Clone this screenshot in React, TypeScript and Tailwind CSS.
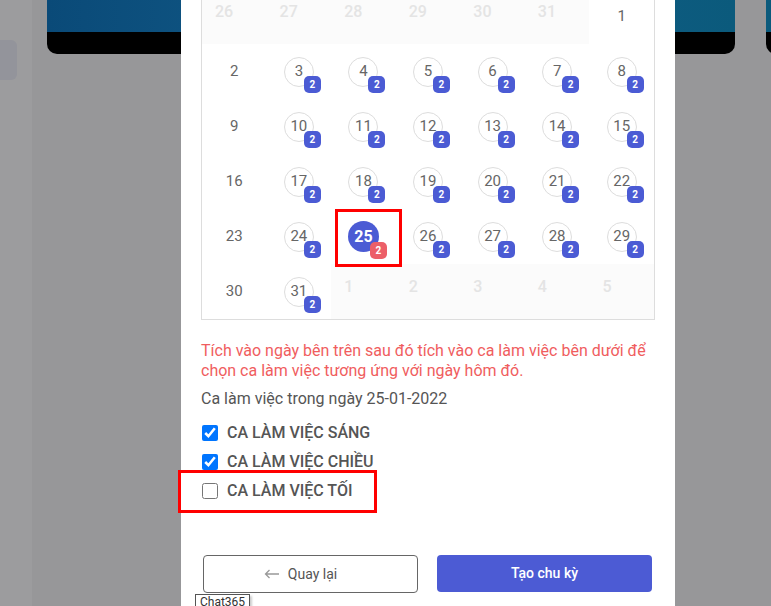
import { useState } from 'react';

type Day = { n: number; kind: 'prev' | 'next' | 'plain' | 'shift' | 'selected' };

const weeks: Day[][] = [
    [
        { n: 26, kind: 'prev' },
        { n: 27, kind: 'prev' },
        { n: 28, kind: 'prev' },
        { n: 29, kind: 'prev' },
        { n: 30, kind: 'prev' },
        { n: 31, kind: 'prev' },
        { n: 1, kind: 'plain' },
    ],
    [2, 3, 4, 5, 6, 7, 8].map((n, i) => ({ n, kind: i === 0 ? 'plain' : 'shift' })),
    [9, 10, 11, 12, 13, 14, 15].map((n, i) => ({ n, kind: i === 0 ? 'plain' : 'shift' })),
    [16, 17, 18, 19, 20, 21, 22].map((n, i) => ({ n, kind: i === 0 ? 'plain' : 'shift' })),
    [23, 24, 25, 26, 27, 28, 29].map((n, i) => ({
        n,
        kind: i === 0 ? 'plain' : n === 25 ? 'selected' : 'shift',
    })),
    [
        { n: 30, kind: 'plain' },
        { n: 31, kind: 'shift' },
        { n: 1, kind: 'next' },
        { n: 2, kind: 'next' },
        { n: 3, kind: 'next' },
        { n: 4, kind: 'next' },
        { n: 5, kind: 'next' },
    ],
];

function DayCell({ day }: { day: Day }) {
    if (day.kind === 'prev' || day.kind === 'next') {
        return (
            <div className="h-[55px] bg-[#fbfbfb] pl-[13px] pt-[14px] text-[16px] font-medium leading-[18px] text-[#e4e4e4]">
                {day.n}
            </div>
        );
    }
    if (day.kind === 'plain') {
        return (
            <div className="flex h-[55px] items-center justify-center text-[15px] text-[#666]">
                {day.n}
            </div>
        );
    }
    const selected = day.kind === 'selected';
    return (
        <div className="relative flex h-[55px] items-center justify-center">
            <div
                className={
                    selected
                        ? 'relative flex h-[31px] w-[31px] items-center justify-center rounded-full bg-[#4b5bd4] text-[16px] font-bold text-white'
                        : 'relative flex h-[30px] w-[30px] items-center justify-center rounded-full border border-[#dddddd] text-[15px] text-[#666]'
                }
            >
                {day.n}
                <span
                    className={`absolute -bottom-[7px] -right-[8px] flex h-[17px] w-[17px] items-center justify-center rounded-[5px] text-[10px] font-bold text-white ${
                        selected ? 'bg-[#ec5f68]' : 'bg-[#4b5bd4]'
                    }`}
                >
                    2
                </span>
            </div>
            {selected && (
                <div className="absolute left-[4px] top-0 h-[58px] w-[67px] border-[3px] border-[#ff0000]" />
            )}
        </div>
    );
}

export default function App() {
    const [shifts, setShifts] = useState([true, true, false]);
    const labels = ['CA LÀM VIỆC SÁNG', 'CA LÀM VIỆC CHIỀU', 'CA LÀM VIỆC TỐI'];

    return (
        <div className="relative h-[606px] w-[771px] overflow-hidden bg-[#979799] font-['Roboto',sans-serif]">
            {/* Background page (dimmed) */}
            <div className="flex h-full">
                <div className="w-[32px] shrink-0 bg-[#9c9c9e] pt-[40px]">
                    <div className="h-[40px] w-[17px] rounded-r-[6px] bg-[#93949b]" />
                </div>
                <div className="flex shrink-0 gap-[31px] pl-[15px]">
                    <div className="flex h-[54px] w-[688px] shrink-0 flex-col overflow-hidden rounded-b-[10px]">
                        <div className="h-[32px] bg-gradient-to-r from-[#0a4a78] via-[#135d8a] to-[#0b5a7c]" />
                        <div className="h-[22px] bg-black" />
                    </div>
                    <div className="flex h-[54px] w-[120px] shrink-0 flex-col overflow-hidden rounded-b-[10px]">
                        <div className="h-[32px] bg-[#0b5a7c]" />
                        <div className="h-[22px] bg-black" />
                    </div>
                </div>
            </div>

            {/* Modal */}
            <div className="absolute left-[181px] top-0 h-full w-[494px] bg-white px-[20px]">
                <div className="-mt-[12px] border border-[#dddddd]">
                    {weeks.map((week, wi) => (
                        <div key={wi} className="grid grid-cols-7">
                            {week.map((day, di) => (
                                <DayCell key={di} day={day} />
                            ))}
                        </div>
                    ))}
                </div>

                <p className="mt-[21px] text-[16px] leading-[20px] text-[#f05d5e]">
                    Tích vào ngày bên trên sau đó tích vào ca làm việc bên dưới để chọn ca làm việc tương ứng với ngày hôm đó.
                </p>
                <p className="mt-[8px] text-[16px] leading-[20px] text-[#555]">
                    Ca làm việc trong ngày 25-01-2022
                </p>

                <div className="mt-[14px] flex flex-col gap-[9px] pl-[1px]">
                    {labels.map((label, i) => (
                        <label key={label} className="relative flex h-[20px] items-center gap-[9px]">
                            <input
                                type="checkbox"
                                checked={shifts[i]}
                                onChange={() =>
                                    setShifts(shifts.map((v, j) => (j === i ? !v : v)))
                                }
                                className="m-0 h-4 w-4 accent-[#0075ff]"
                            />
                            <span className="text-[16px] font-medium text-[#555]">{label}</span>
                            {i === 2 && (
                                <div className="absolute -left-[24px] -top-[11px] h-[43px] w-[199px] border-[3px] border-[#ff0000]" />
                            )}
                        </label>
                    ))}
                </div>

                <div className="mt-[54px] flex gap-[19px] px-[2px]">
                    <button className="flex h-[38px] w-[215px] items-center justify-center gap-[8px] rounded-[4px] border border-[#666] bg-white pr-[20px] text-[14px] text-[#555]">
                        <svg width="16" height="10" viewBox="0 0 16 10" fill="none" stroke="#999" strokeWidth="1.3">
                            <path d="M15 5H1.5M5.5 1L1.5 5l4 4" />
                        </svg>
                        Quay lại
                    </button>
                    <button className="flex h-[37px] w-[215px] items-center justify-center rounded-[4px] bg-[#4c5bd4] text-[14px] font-medium text-white">
                        Tạo chu kỳ
                    </button>
                </div>
            </div>

            {/* Tooltip */}
            <div className="absolute left-[195px] top-[594px] border border-[#555] bg-white px-[4px] text-[12px] leading-[14px] text-[#333] shadow-[2px_2px_2px_rgba(0,0,0,0.2)]">
                Chat365
            </div>
        </div>
    );
}
